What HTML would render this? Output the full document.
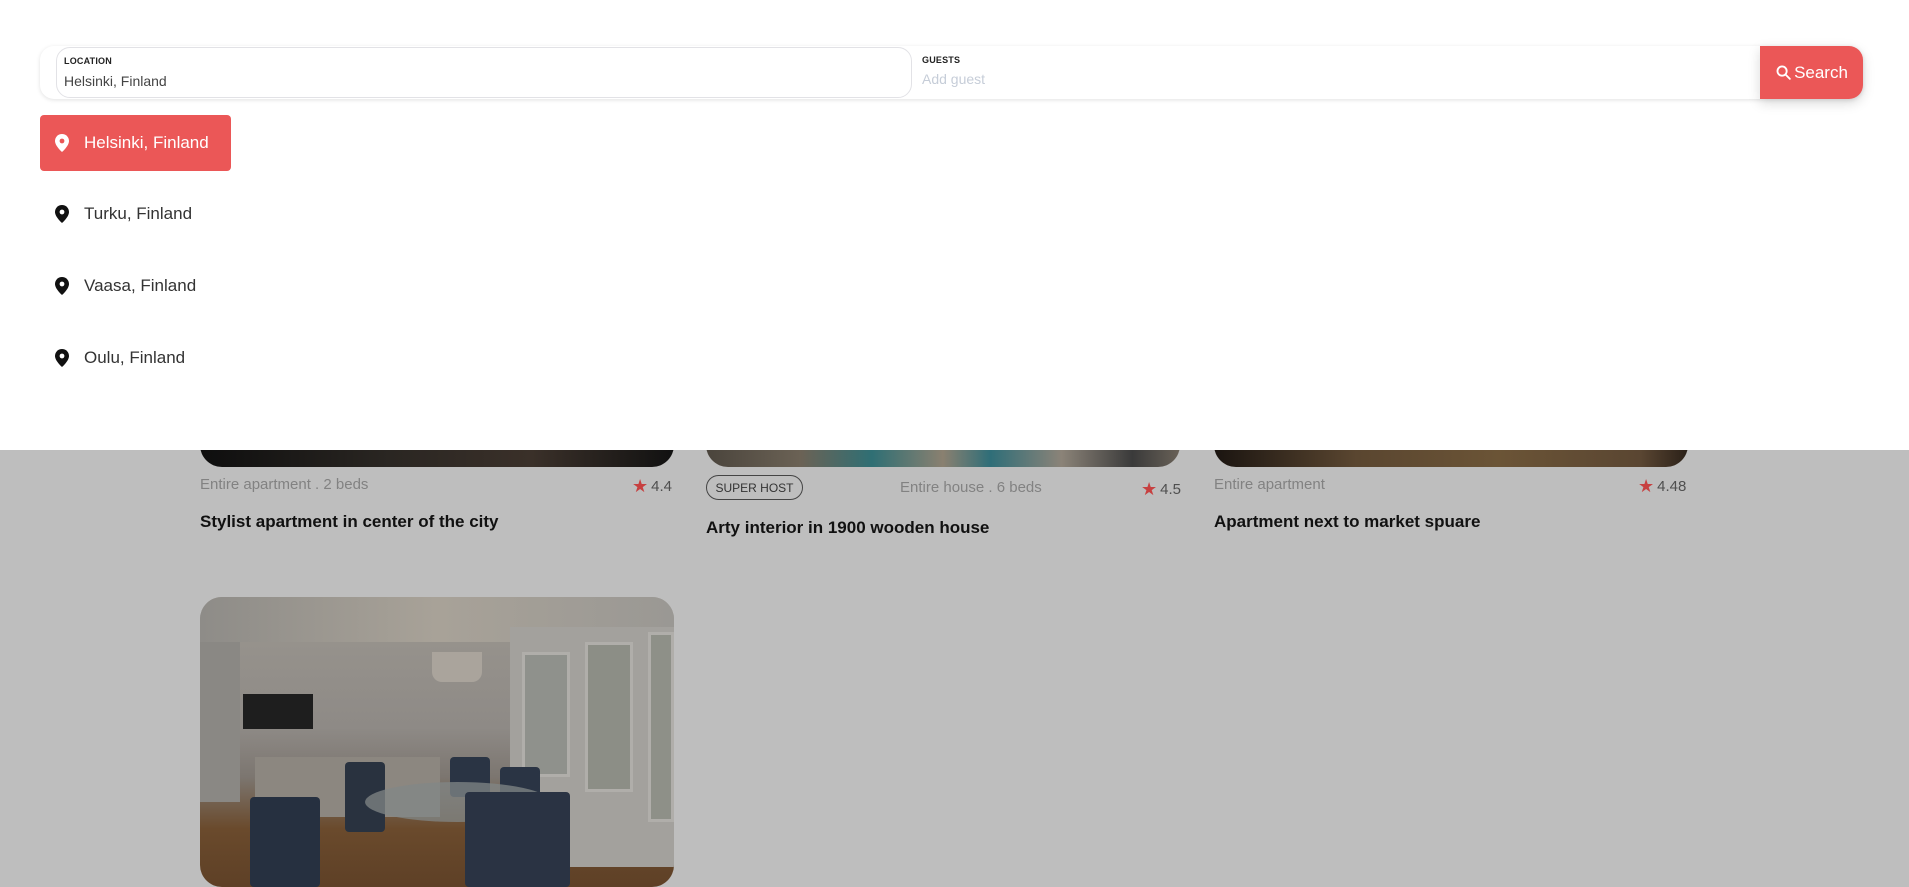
<!DOCTYPE html>
<html><head><meta charset="utf-8"><style>
*{margin:0;padding:0;box-sizing:border-box}
body{width:1909px;height:872px;overflow:hidden;background:#bebebe;font-family:"Liberation Sans",sans-serif;position:relative}
.panel{position:absolute;left:0;top:0;width:1909px;height:450px;background:#fff}
.bar{position:absolute;left:40px;top:46px;width:1823px;height:53px;border-radius:14px;background:#fff;box-shadow:0 1px 4px rgba(0,0,0,.12)}
.loc{position:absolute;left:16px;top:1px;width:856px;height:51px;border:1px solid #e2e2e6;border-radius:14px;background:#fff}
.lbl{position:absolute;font-size:9px;font-weight:bold;color:#222;letter-spacing:.2px}
.val{position:absolute;font-size:14px;color:#444}
.btn{position:absolute;right:0;top:0;width:103px;height:53px;background:#eb5757;border-radius:0 14px 14px 0;color:#fff;font-size:17px;display:flex;align-items:center;justify-content:center;gap:2px;box-shadow:0 4px 12px rgba(0,0,0,.15)}
.item{position:absolute;left:40px;height:56px;display:flex;align-items:center;font-size:17px;color:#333}
.item svg{margin-left:15px;margin-right:15px}
.active{background:#eb5757;color:#fff;border-radius:4px;width:191px}
.img{position:absolute;border-radius:0 0 22px 22px;overflow:hidden}
.meta{position:absolute;font-size:15px;color:#828282}
.rate{position:absolute;font-size:15px;color:#4f4f4f;display:flex;align-items:center;gap:3px}
.title{position:absolute;font-size:17px;font-weight:bold;color:#111}
</style></head><body>

<div class="img" style="left:200px;top:440px;width:474px;height:27px;background:linear-gradient(90deg,#0e0e0e,#2a2622 40%,#3a3029 70%,#111)"></div>
<div class="img" style="left:706px;top:440px;width:474px;height:27px;background:linear-gradient(90deg,#4a443c,#6b6255 20%,#2f6f74 35%,#8a8070 50%,#2f6e78 60%,#8b8378 75%,#3a3a3a 90%,#6a6258)"></div>
<div class="img" style="left:1214px;top:440px;width:474px;height:27px;background:linear-gradient(90deg,#1a1410,#5a4630 30%,#6b5436 60%,#5a4632 90%,#2a2018)"></div>

<div class="meta" style="left:200px;top:476px">Entire apartment . 2 beds</div>
<div class="rate" style="left:632px;top:476px"><span style="color:#c74040;font-size:18px">★</span>4.4</div>
<div class="title" style="left:200px;top:512px">Stylist apartment in center of the city</div>

<div style="position:absolute;left:706px;top:475px;width:97px;height:25px;border:1px solid #444;border-radius:13px;font-size:12px;color:#333;display:flex;align-items:center;justify-content:center">SUPER HOST</div>
<div class="meta" style="left:900px;top:479px">Entire house . 6 beds</div>
<div class="rate" style="left:1141px;top:479px"><span style="color:#c74040;font-size:18px">★</span>4.5</div>
<div class="title" style="left:706px;top:518px">Arty interior in 1900 wooden house</div>

<div class="meta" style="left:1214px;top:476px">Entire apartment</div>
<div class="rate" style="left:1638px;top:476px"><span style="color:#c74040;font-size:18px">★</span>4.48</div>
<div class="title" style="left:1214px;top:512px">Apartment next to market spuare</div>

<div style="position:absolute;left:200px;top:597px;width:474px;height:290px;border-radius:22px;overflow:hidden;background:linear-gradient(180deg,#9a968f 0%,#8e8a86 45%,#7c7670 62%,#6a4a2c 80%,#5e4026 100%)">
  <div style="position:absolute;left:0;top:0;width:474px;height:45px;background:linear-gradient(90deg,#8e8c88,#a8a298 50%,#9a9894)"></div>
  <div style="position:absolute;left:0;top:45px;width:40px;height:160px;background:#8a8884"></div>
  <div style="position:absolute;left:310px;top:30px;width:164px;height:240px;background:#a3a19d"></div>
  <div style="position:absolute;left:322px;top:55px;width:48px;height:125px;background:#8f918c;border:3px solid #b0aeaa"></div>
  <div style="position:absolute;left:385px;top:45px;width:48px;height:150px;background:#8c8e86;border:3px solid #b0aeaa"></div>
  <div style="position:absolute;left:448px;top:35px;width:26px;height:190px;background:#8e9088;border:3px solid #b0aeaa"></div>
  <div style="position:absolute;left:43px;top:97px;width:70px;height:35px;background:#1e1e1e"></div>
  <div style="position:absolute;left:55px;top:160px;width:185px;height:60px;background:#8c8780"></div>
  <div style="position:absolute;left:50px;top:200px;width:70px;height:90px;background:#263040;border-radius:4px"></div>
  <div style="position:absolute;left:145px;top:165px;width:40px;height:70px;background:#29323f;border-radius:4px"></div>
  <div style="position:absolute;left:250px;top:160px;width:40px;height:40px;background:#2a3444;border-radius:4px"></div>
  <div style="position:absolute;left:300px;top:170px;width:40px;height:50px;background:#2a3444;border-radius:4px"></div>
  <div style="position:absolute;left:165px;top:185px;width:185px;height:40px;border-radius:50%;background:rgba(130,135,135,.75)"></div>
  <div style="position:absolute;left:265px;top:195px;width:105px;height:95px;background:#2a3343;border-radius:4px"></div>
  <div style="position:absolute;left:232px;top:55px;width:50px;height:30px;background:#aaa49c;border-radius:0 0 10px 10px"></div>
</div>

<div class="panel">
  <div class="bar">
    <div class="loc">
      <div class="lbl" style="left:7px;top:8px">LOCATION</div>
      <div class="val" style="left:7px;top:25px">Helsinki, Finland</div>
    </div>
    <div class="lbl" style="left:882px;top:9px">GUESTS</div>
    <div class="val" style="left:882px;top:25px;color:#c6cdd8">Add guest</div>
    <div class="btn"><svg width="17" height="17" viewBox="0 0 24 24"><circle cx="10" cy="10" r="6.5" fill="none" stroke="#fff" stroke-width="2.6"/><path d="M15 15l6 6" stroke="#fff" stroke-width="2.6" stroke-linecap="round"/></svg>Search</div>
  </div>
  <div class="item active" style="top:115px"><svg width="14" height="18" viewBox="0 0 14 18"><path d="M7 0C3.1 0 0 3.1 0 7c0 5 7 11 7 11s7-6 7-11c0-3.9-3.1-7-7-7z" fill="#fff"/><circle cx="7" cy="7" r="2.4" fill="#eb5757"/></svg>Helsinki, Finland</div>
  <div class="item" style="top:186px"><svg width="14" height="18" viewBox="0 0 14 18"><path d="M7 0C3.1 0 0 3.1 0 7c0 5 7 11 7 11s7-6 7-11c0-3.9-3.1-7-7-7z" fill="#111"/><circle cx="7" cy="7" r="2.4" fill="#fff"/></svg>Turku, Finland</div>
  <div class="item" style="top:258px"><svg width="14" height="18" viewBox="0 0 14 18"><path d="M7 0C3.1 0 0 3.1 0 7c0 5 7 11 7 11s7-6 7-11c0-3.9-3.1-7-7-7z" fill="#111"/><circle cx="7" cy="7" r="2.4" fill="#fff"/></svg>Vaasa, Finland</div>
  <div class="item" style="top:330px"><svg width="14" height="18" viewBox="0 0 14 18"><path d="M7 0C3.1 0 0 3.1 0 7c0 5 7 11 7 11s7-6 7-11c0-3.9-3.1-7-7-7z" fill="#111"/><circle cx="7" cy="7" r="2.4" fill="#fff"/></svg>Oulu, Finland</div>
</div>
</body></html>
